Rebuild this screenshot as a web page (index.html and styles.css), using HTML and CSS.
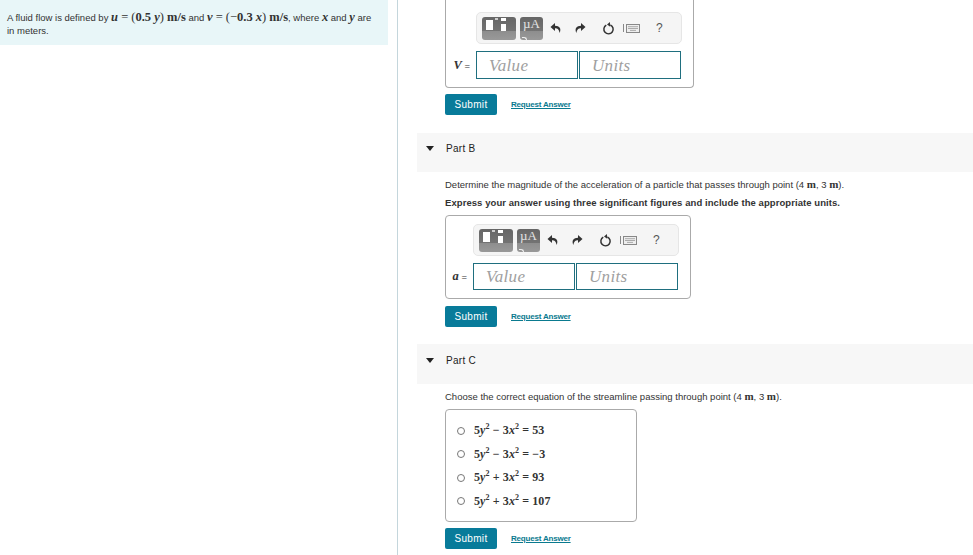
FILE: index.html
```html
<!DOCTYPE html>
<html lang="en">
<head>
    <meta charset="UTF-8">
    <title>Fluid flow problem</title>
    <link rel="stylesheet" href="styles.css">
</head>
<body>
    <svg class="icon-defs" width="0" height="0">
        <symbol id="undo" viewBox="0 0 12 12"><path d="M5 1 0.5 5 5 9V6.3C7.6 6.3 9 7.4 9.6 11 11.6 6.6 9.6 3.7 5 3.7Z"/></symbol>
        <symbol id="redo" viewBox="0 0 12 12"><path d="M7 1 11.5 5 7 9V6.3C4.4 6.3 3 7.4 2.4 11 .4 6.6 2.4 3.7 7 3.7Z"/></symbol>
        <symbol id="reset" viewBox="0 0 14 14"><path class="ring" d="M4.6 3.4A5 5 0 1 0 9 3.2"/><path d="M8.6 0 5.4 2.6 8.8 5.2Z"/></symbol>
        <symbol id="keys" viewBox="0 0 14 9"><rect class="key-frame" x=".5" y=".5" width="13" height="8"/><path class="key-rows" d="M2 2.7h10M2 4.5h10M4 6.4h6"/></symbol>
        <symbol id="templates" viewBox="0 0 34 23"><rect class="tool-glyph" x="4" y="3" width="7" height="10"/><rect class="tool-glyph-dim" x="13" y="1" width="3" height="2"/><rect class="tool-glyph" x="19" y="1" width="5" height="3"/><rect class="tool-glyph" x="19" y="7" width="5" height="7"/></symbol>
    </svg>

    <!-- Problem text -->
    <div class="left-col">
        <div class="intro">
            A fluid flow is defined by <span class="math"><b><i>u</i></b> = (<b>0.5 <i>y</i></b>) <b>m/s</b></span> and <span class="math"><b><i>v</i></b> = (&minus;<b>0.3 <i>x</i></b>) <b>m/s</b></span>, where <span class="math"><b><i>x</i></b></span> and <span class="math"><b><i>y</i></b></span> are in meters.
        </div>
    </div>

    <div class="right-col">
        <!-- Part A, scrolled off at the top -->
        <div class="part-a">
            <div class="answer-box answer-cut">
                <div class="toolbar">
                    <div class="tool-btn tool-wide"><svg class="tool-svg"><use href="#templates"/></svg></div>
                    <div class="tool-btn tool-units"><span class="mu">&micro;A</span><span class="tool-hook"></span></div>
                    <svg class="act act-undo"><use href="#undo"/></svg>
                    <svg class="act act-redo"><use href="#redo"/></svg>
                    <svg class="act act-reset"><use href="#reset"/></svg>
                    <span class="tool-sep"></span>
                    <svg class="act-keys"><use href="#keys"/></svg>
                    <span class="help">?</span>
                </div>
                <div class="answer-row">
                    <span class="answer-label"><b><i>V</i></b> =</span>
                    <div class="field">Value</div>
                    <div class="field">Units</div>
                </div>
            </div>
            <div class="actions">
                <button class="submit">Submit</button>
                <a class="request" href="#">Request Answer</a>
            </div>
        </div>

        <!-- Part B -->
        <div class="part-head">
            <span class="caret"></span>
            <span class="part-title">Part B</span>
        </div>
        <div class="part-body">
            <p class="question">Determine the magnitude of the acceleration of a particle that passes through point (4 <span class="math-unit">m</span>, 3 <span class="math-unit">m</span>).</p>
            <p class="hint">Express your answer using three significant figures and include the appropriate units.</p>
            <div class="answer-box answer-b">
                <div class="toolbar">
                    <div class="tool-btn tool-wide"><svg class="tool-svg"><use href="#templates"/></svg></div>
                    <div class="tool-btn tool-units"><span class="mu">&micro;A</span><span class="tool-hook"></span></div>
                    <svg class="act act-undo"><use href="#undo"/></svg>
                    <svg class="act act-redo"><use href="#redo"/></svg>
                    <svg class="act act-reset"><use href="#reset"/></svg>
                    <span class="tool-sep"></span>
                    <svg class="act-keys"><use href="#keys"/></svg>
                    <span class="help">?</span>
                </div>
                <div class="answer-row">
                    <span class="answer-label"><b><i>a</i></b> =</span>
                    <div class="field field-b">Value</div>
                    <div class="field field-b">Units</div>
                </div>
            </div>
            <div class="actions actions-b">
                <button class="submit">Submit</button>
                <a class="request" href="#">Request Answer</a>
            </div>
        </div>

        <!-- Part C -->
        <div class="part-head part-head-c">
            <span class="caret"></span>
            <span class="part-title">Part C</span>
        </div>
        <div class="part-body">
            <p class="question">Choose the correct equation of the streamline passing through point (4 <span class="math-unit">m</span>, 3 <span class="math-unit">m</span>).</p>
            <div class="choices">
                <div class="choice"><span class="radio"></span><span class="eq">5<i>y</i><sup>2</sup> &minus; 3<i>x</i><sup>2</sup> = 53</span></div>
                <div class="choice"><span class="radio"></span><span class="eq">5<i>y</i><sup>2</sup> &minus; 3<i>x</i><sup>2</sup> = &minus;3</span></div>
                <div class="choice"><span class="radio"></span><span class="eq">5<i>y</i><sup>2</sup> + 3<i>x</i><sup>2</sup> = 93</span></div>
                <div class="choice"><span class="radio"></span><span class="eq">5<i>y</i><sup>2</sup> + 3<i>x</i><sup>2</sup> = 107</span></div>
            </div>
            <div class="actions">
                <button class="submit">Submit</button>
                <a class="request" href="#">Request Answer</a>
            </div>
        </div>
    </div>
</body>
</html>
```

FILE: styles.css
```css
* {
    box-sizing: border-box;
    margin: 0;
    padding: 0;
}

html, body {
    height: 555px;
    overflow: hidden;
}

body {
    display: flex;
    background-color: #fff;
    color: #333;
    font-family: 'Liberation Sans', Arial, sans-serif;
    font-size: 9.5px;
}

.icon-defs {
    position: absolute;
}

.left-col {
    width: 398px;
    height: 555px;
    border-right: 1px solid #c4d6dc;
    flex-shrink: 0;
}

.intro {
    width: 388px;
    height: 45px;
    padding: 11px 14px 0 7px;
    background-color: #e8f6f8;
    line-height: 13px;
}

.math {
    font-family: 'Liberation Serif', serif;
    font-size: 12.5px;
    line-height: 10px;
}

.math-unit {
    font-family: 'Liberation Serif', serif;
    font-size: 11px;
    font-weight: bold;
    line-height: 10px;
}

.right-col {
    flex: 1;
    padding-left: 19px;
}

.part-a {
    height: 133px;
    padding-left: 28px;
}

.answer-box {
    border: 1px solid #aaa;
    border-radius: 4px;
}

.answer-cut {
    width: 249px;
    height: 88px;
    border-top: none;
    border-radius: 0 0 4px 4px;
    padding: 12px 0 0 30px;
}

.answer-b {
    width: 246px;
    height: 84px;
    margin-top: 6px;
    padding: 8px 0 0 27px;
}

.toolbar {
    display: flex;
    align-items: center;
    width: 206px;
    height: 32px;
    padding-left: 5px;
    background-color: #f5f5f5;
    border: 1px solid #e6e6e6;
    border-radius: 5px;
}

.tool-btn {
    position: relative;
    height: 23px;
    border-radius: 3px;
    background: linear-gradient(#666 0, #737373 60%, #8e8e8e 62%, #999 100%);
    overflow: hidden;
}

.tool-wide {
    width: 34px;
}

.tool-units {
    width: 23px;
    margin-left: 4px;
    text-align: center;
}

.tool-svg {
    display: block;
    width: 34px;
    height: 23px;
}

.tool-glyph {
    fill: #fff;
}

.tool-glyph-dim {
    fill: #ccc;
}

.mu {
    display: block;
    color: #e4e4e4;
    font-family: 'Liberation Serif', serif;
    font-size: 13px;
    line-height: 13px;
}

.tool-hook {
    position: absolute;
    left: 2px;
    bottom: 0;
    width: 5px;
    height: 3px;
    border-top: 1px solid #eee;
    border-right: 1px solid #eee;
    border-radius: 0 3px 0 0;
}

.act {
    width: 12px;
    height: 12px;
    fill: #333;
    flex-shrink: 0;
}

.act-undo {
    margin-left: 7px;
}

.act-redo {
    margin-left: 12px;
}

.act-reset {
    width: 13px;
    height: 13px;
    margin-left: 16px;
}

.ring {
    fill: none;
    stroke: #333;
    stroke-width: 1.6;
}

.tool-sep {
    width: 1px;
    height: 8px;
    margin-left: 8px;
    background-color: #888;
}

.act-keys {
    width: 14px;
    height: 9px;
    margin-left: 2px;
}

.key-frame {
    fill: #eee;
    stroke: #888;
}

.key-rows {
    fill: none;
    stroke: #aaa;
}

.help {
    margin-left: 16px;
    color: #555;
    font-size: 12px;
}

.answer-row {
    display: flex;
    align-items: center;
    margin-top: 7px;
}

.answer-label {
    width: 25px;
    margin-left: -23px;
    margin-right: -2px;
    text-align: right;
    padding-right: 8px;
    font-size: 9.5px;
    color: #333;
    white-space: nowrap;
}

.answer-label b {
    font-family: 'Liberation Serif', serif;
    font-size: 12.5px;
}

.field {
    width: 102px;
    height: 28px;
    margin-right: 1px;
    padding-left: 12px;
    border: 1px solid #1f6f7f;
    color: #a0a0a0;
    font-family: 'Liberation Serif', serif;
    font-style: italic;
    font-size: 17px;
    line-height: 28px;
    letter-spacing: 0.3px;
}

.field-b {
    height: 27px;
    line-height: 26px;
}

.actions {
    display: flex;
    align-items: center;
    margin-top: 6px;
}

.actions-b {
    margin-top: 7px;
}

.submit {
    width: 52px;
    height: 21px;
    border: none;
    border-radius: 2px;
    background-color: #087b9a;
    color: #fff;
    font-family: 'Liberation Sans', Arial, sans-serif;
    font-size: 10px;
    letter-spacing: 0.3px;
}

.request {
    margin-left: 14px;
    color: #0a7a8f;
    font-size: 8px;
    font-weight: bold;
    letter-spacing: -0.2px;
    text-decoration: underline;
}

.part-head {
    display: flex;
    align-items: center;
    height: 39px;
    padding-bottom: 9px;
    background-color: #f7f7f7;
}

.part-head-c {
    height: 40px;
    margin-top: 17px;
    padding-bottom: 8px;
}

.caret {
    width: 0;
    height: 0;
    margin-left: 9px;
    border-left: 4.5px solid transparent;
    border-right: 4.5px solid transparent;
    border-top: 5px solid #222;
}

.part-title {
    margin-left: 12px;
    color: #222;
    font-size: 10px;
    letter-spacing: 0.3px;
}

.part-body {
    padding-left: 28px;
}

.question {
    padding-top: 6px;
    line-height: 13px;
}

.hint {
    margin-top: 5px;
    line-height: 13px;
    font-weight: bold;
    letter-spacing: 0.07px;
}

.choices {
    width: 192px;
    height: 113px;
    margin-top: 6px;
    padding: 9px 0 0 11px;
    border: 1px solid #aaa;
    border-radius: 4px;
}

.choice {
    display: flex;
    align-items: center;
    height: 23.5px;
}

.radio {
    width: 8px;
    height: 8px;
    border: 1px solid #777;
    border-radius: 50%;
}

.eq {
    margin-left: 9px;
    font-family: 'Liberation Serif', serif;
    font-size: 12px;
    font-weight: bold;
    color: #333;
    letter-spacing: 0.1px;
}

.eq sup {
    font-size: 8px;
    line-height: 0;
}
```
